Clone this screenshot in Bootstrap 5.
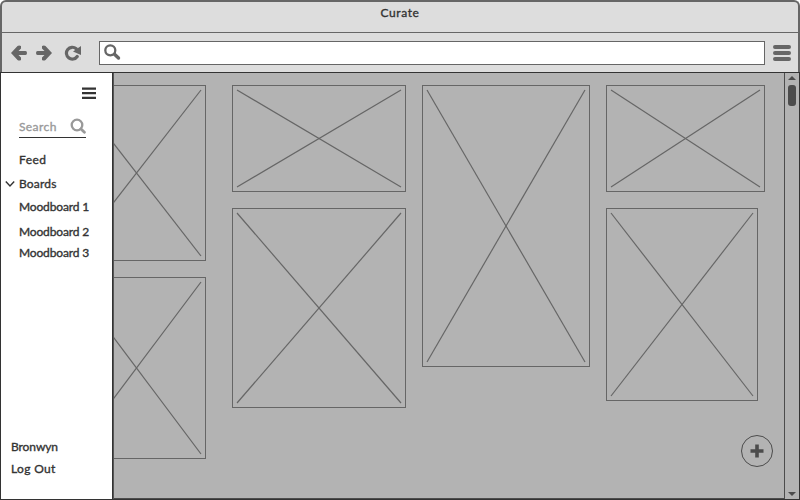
<!DOCTYPE html>
<html lang="en">
<head>
<meta charset="utf-8">
<meta name="viewport" content="width=device-width, initial-scale=1">
<title>Curate</title>
<link href="https://cdn.jsdelivr.net/npm/bootstrap@5.3.0/dist/css/bootstrap.min.css" rel="stylesheet">
<style>
body{font-family:Lato,"Open Sans",sans-serif;font-size:12px;line-height:16px;color:#333;background:#fff}
svg{display:block;flex:none}
.window{width:800px;height:500px}
.chrome{height:72px;background:#ddd;border:2px solid #666;border-bottom:0;border-radius:6px 6px 0 0}
.titlebar{height:31px;border-bottom:1px solid #666;padding-top:3px}
.label{font-weight:400;-webkit-text-stroke:.35px currentColor;white-space:nowrap}
.title{letter-spacing:.6px}
.toolbar{height:39px;padding:0 7px 0 9px}
.address{height:24px;margin:0 8px 0 17px;border:1px solid #666;background:#fff;padding-left:3px}
.address svg{margin-top:-1px}
.reload{margin-left:12px}
.page{height:428px;border:1px solid #333;background:#b3b3b3}
.side{width:113px;flex:none;background:#fff;border-right:1px solid #555;box-shadow:inset -1px 0 #333;padding:14px 0 22px 10px}
.menu{margin-right:17px}
.search{width:67px;height:20px;margin:19px 0 14px 8px;border-bottom:1px solid #333;color:#999;letter-spacing:.4px}
.search .label{padding-top:1px}
.side a{color:#333;text-decoration:none;display:block;height:16px}
.indent{margin-left:8px}
.feed{letter-spacing:.4px}
.boards{letter-spacing:.2px;margin-bottom:7px}
.board{letter-spacing:-.15px}
.board-1{margin-bottom:9px}
.board-2{margin-bottom:5px}
.user{margin-bottom:6px;letter-spacing:-.08px}
.logout{letter-spacing:.35px}
.caret{margin:2px 4px 0 -6px}
.canvas{border-bottom:1px solid #4c4c4c;padding-top:12px}
.stack-col{display:flex;flex-direction:column;gap:16px;flex:none}
.first{margin-left:-47px;margin-right:26px}
.tile{border:1px solid #666;padding:4px}
.tile svg{width:100%;height:100%;overflow:visible}
.tile line{stroke:#666;stroke-width:1.2}
.t1{width:139px;height:176px}.t2{width:139px;height:182px}
.t3{width:174px;height:107px}.t4{width:174px;height:200px}
.t5{width:168px;height:282px}
.t6{width:159px;height:107px}.t7{width:152px;height:193px}
.scroll{width:15px;flex:none;border-left:1px solid #4c4c4c;padding:3px 0 3px}
.thumb{width:8px;height:21px;border-radius:3px;background:#4c4c4c;margin-top:5px}
.add{right:11px;bottom:31px;width:32px;height:32px}
</style>
</head>
<body>
<div class="window d-flex flex-column overflow-hidden">
  <header class="chrome flex-shrink-0">
    <div class="titlebar text-center"><span class="label title">Curate</span></div>
    <div class="toolbar d-flex align-items-center">
      <svg width="16" height="16" viewBox="0 0 16 16"><path d="M0 8 6.5 1Q8 0 10 1V3.5L7.5 6H14.5Q16 6 16 8T14.5 10H7.5L10 12.5V15Q8 16 6.5 15z" fill="#666"/></svg>
      <svg class="ms-2" width="17" height="16" viewBox="-1 0 17 16"><path d="M16 8 9.5 1Q8 0 6 1V3.5L8.5 6H1.5Q0 6 0 8T1.5 10H8.5L6 12.5V15Q8 16 9.5 15z" fill="#666"/></svg>
      <svg class="reload" width="18" height="16" viewBox="0 0 18 16"><path d="M13.2 11.5A5.9 5.9 0 1 1 12.2 3.7" fill="none" stroke="#666" stroke-width="3.2" stroke-linecap="round"/><path d="M17 1v9L9 6.5z" fill="#666"/></svg>
      <div class="address flex-grow-1 d-flex align-items-center">
        <svg width="18" height="18" viewBox="0 0 18 18" fill="none" stroke="#666"><circle cx="7.3" cy="7.3" r="5" stroke-width="2.3"/><path d="m11.5 11.2 4 3.8" stroke-width="3.4" stroke-linecap="round"/></svg>
      </div>
      <svg width="18" height="16" viewBox="0 0 18 16" stroke="#666" stroke-width="4" stroke-linecap="round"><path d="M2 2h14M2 8h14M2 14h14"/></svg>
    </div>
  </header>
  <main class="page d-flex">
    <aside class="side d-flex flex-column">
      <svg class="menu align-self-end" width="14" height="12" viewBox="0 0 14 12"><path d="M0 .5h14v2.200H0zM0 5h14v2.200H0zM0 9.700h14v2.200H0z" fill="#333"/></svg>
      <div class="search d-flex justify-content-between flex-shrink-0">
        <span class="label">Search</span>
        <svg width="16" height="16" viewBox="0 0 16 16" fill="none" stroke="#999"><circle cx="7" cy="7" r="5.3" stroke-width="2.3"/><path d="m11 11 3.4 3.3" stroke-width="2.8" stroke-linecap="round"/></svg>
      </div>
      <nav class="label">
        <a class="indent feed mb-2" href="#">Feed</a>
        <a class="d-flex boards" href="#"><svg class="caret" width="10" height="12" viewBox="0 0 10 12"><path d="m.8 3.5 4.2 4.5 4.2-4.5" fill="none" stroke="#333" stroke-width="1.4"/></svg>Boards</a>
        <a class="indent board board-1" href="#">Moodboard 1</a>
        <a class="indent board board-2" href="#">Moodboard 2</a>
        <a class="indent board" href="#">Moodboard 3</a>
      </nav>
      <div class="label mt-auto">
        <a class="user" href="#">Bronwyn</a>
        <a class="logout" href="#">Log Out</a>
      </div>
    </aside>
    <section class="canvas position-relative flex-grow-1 d-flex overflow-hidden">
      <div class="stack-col first">
        <div class="tile t1"><svg><line x2="100%" y2="100%"/><line x1="100%" y2="100%"/></svg></div>
        <div class="tile t2"><svg><line x2="100%" y2="100%"/><line x1="100%" y2="100%"/></svg></div>
      </div>
      <div class="d-flex gap-3">
        <div class="stack-col">
          <div class="tile t3"><svg><line x2="100%" y2="100%"/><line x1="100%" y2="100%"/></svg></div>
          <div class="tile t4"><svg><line x2="100%" y2="100%"/><line x1="100%" y2="100%"/></svg></div>
        </div>
        <div class="stack-col">
          <div class="tile t5"><svg><line x2="100%" y2="100%"/><line x1="100%" y2="100%"/></svg></div>
        </div>
        <div class="stack-col">
          <div class="tile t6"><svg><line x2="100%" y2="100%"/><line x1="100%" y2="100%"/></svg></div>
          <div class="tile t7"><svg><line x2="100%" y2="100%"/><line x1="100%" y2="100%"/></svg></div>
        </div>
      </div>
      <svg class="add position-absolute" viewBox="0 0 32 32"><circle cx="16" cy="16" r="15.5" fill="none" stroke="#4c4c4c"/><path d="M16 9.5v13M9.5 16h13" stroke="#4c4c4c" stroke-width="3.6"/></svg>
    </section>
    <div class="scroll d-flex flex-column align-items-center">
      <svg width="8" height="4" viewBox="0 0 8 4"><path d="M0 4 4 0l4 4z" fill="#4c4c4c"/></svg>
      <div class="thumb"></div>
      <svg class="mt-auto" width="8" height="4" viewBox="0 0 8 4"><path d="M0 0h8L4 4z" fill="#4c4c4c"/></svg>
    </div>
  </main>
</div>
<script src="https://cdn.jsdelivr.net/npm/bootstrap@5.3.0/dist/js/bootstrap.bundle.min.js"></script>
</body>
</html>
